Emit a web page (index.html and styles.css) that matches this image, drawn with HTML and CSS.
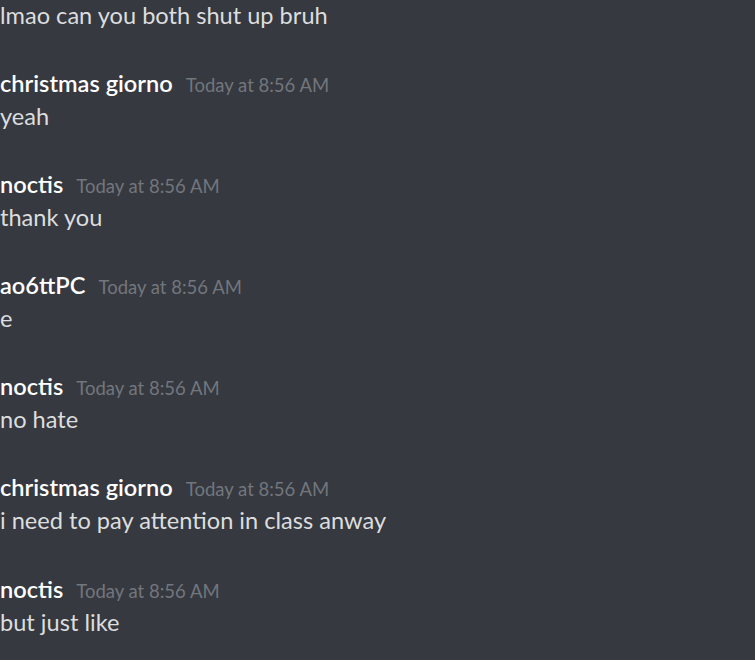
FILE: index.html
```html
<!DOCTYPE html>
<html>
<head>
<meta charset="utf-8">
<link rel="stylesheet" href="styles.css">
</head>
<body>
<div class="chat">
  <div class="group first">
    <div class="content">lmao can you both shut up bruh</div>
  </div>
  <div class="group">
    <div class="header"><span class="name">christmas giorno</span><span class="time">Today at 8:56 AM</span></div>
    <div class="content">yeah</div>
  </div>
  <div class="group">
    <div class="header"><span class="name">noctis</span><span class="time">Today at 8:56 AM</span></div>
    <div class="content">thank you</div>
  </div>
  <div class="group">
    <div class="header"><span class="name">ao6ttPC</span><span class="time">Today at 8:56 AM</span></div>
    <div class="content">e</div>
  </div>
  <div class="group">
    <div class="header"><span class="name">noctis</span><span class="time">Today at 8:56 AM</span></div>
    <div class="content">no hate</div>
  </div>
  <div class="group">
    <div class="header"><span class="name">christmas giorno</span><span class="time">Today at 8:56 AM</span></div>
    <div class="content">i need to pay attention in class anway</div>
  </div>
  <div class="group">
    <div class="header"><span class="name">noctis</span><span class="time">Today at 8:56 AM</span></div>
    <div class="content">but just like</div>
  </div>
</div>
</body>
</html>
```

FILE: styles.css
```css
html, body {
  margin: 0;
  padding: 0;
  background: #36393f;
  height: 100%;
}
body {
  font-family: Lato, "Open Sans", sans-serif;
  overflow: hidden;
}
.chat {
  display: flex;
  flex-direction: column;
  gap: 35.2px;
  margin-top: -1.5px;
}
.header {
  display: flex;
  align-items: baseline;
  gap: 13px;
  line-height: 33px;
  height: 33px;
}
.name {
  color: #ffffff;
  font-size: 23.6px;
  font-weight: 600;
}
.time {
  color: #72767d;
  font-size: 18.5px;
}
.content {
  color: #dcddde;
  font-size: 23.6px;
  font-weight: 400;
  line-height: 33px;
  height: 33px;
  white-space: nowrap;
}
```
